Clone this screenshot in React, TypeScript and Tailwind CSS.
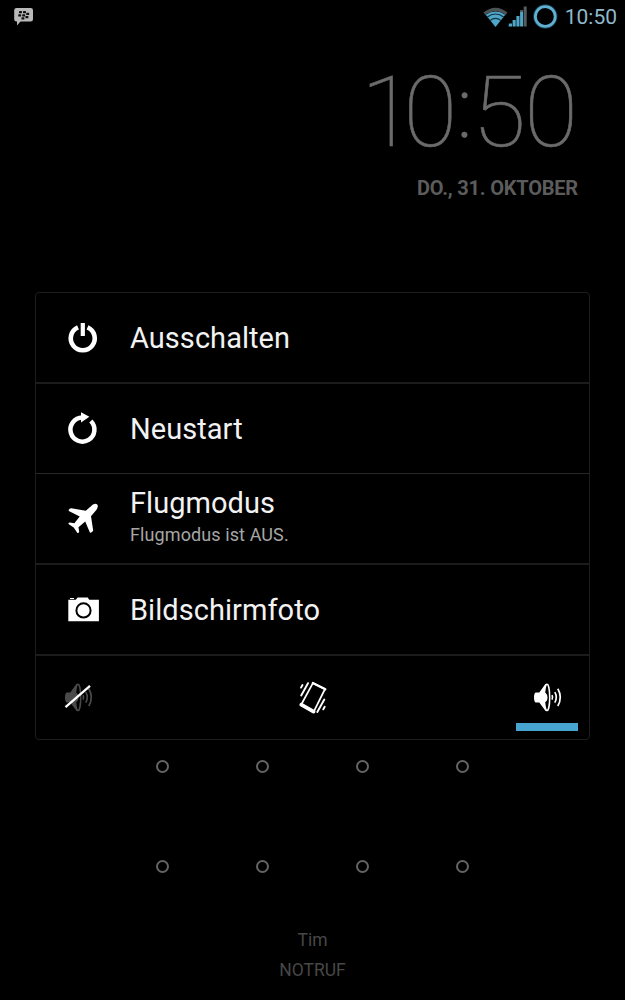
import type { ReactNode } from 'react'
import clsx from 'clsx'

function MessengerIcon() {
  const dots = [
    [19.6, 11.2], [23.6, 11.2],
    [18.8, 14.4], [22.8, 14.4], [26.8, 13],
    [22, 17.5], [26, 16.2],
  ]
  return (
    <svg width="40" height="33" viewBox="0 0 40 33">
      <path d="M16.500 8h14.200q2.300 0 2.300 2.300v9q0 2.300-2.300 2.300H20.500L17 25.500v-3.900h-.5q-2.300 0-2.300-2.300v-9q0-2.300 2.300-2.300z" fill="#b9b9b9" />
      {dots.map(([x, y]) => (
        <rect key={`${x}-${y}`} x={x} y={y} width="3" height="2.300" rx="0.600" fill="#111" transform="translate(-.6 -.2)" />
      ))}
    </svg>
  )
}

function WifiIcon() {
  return (
    <svg width="25" height="33" viewBox="0 0 25 33">
      <path d="M0.500 12.500Q12.500 3 24.500 12.500L22.600 15Q12.500 7.500 2.400 15z" fill="#4c5357" />
      <path d="M2.700 14.800Q12.500 8 22.300 14.800L12.500 27z" fill="#4fa6c9" />
      <path d="M4 17.200Q12.500 10.800 21 17.200M7 20.600Q12.500 16 18 20.600" fill="none" stroke="#133340" strokeWidth="1.200" />
    </svg>
  )
}

function SignalIcon() {
  return (
    <svg width="19" height="33" viewBox="0 0 19 33">
      <path d="M1 23.500h3V26.500H.5zM4.600 20h3.100v6.500H4.600zM8.400 16h3.100v10.500H8.400zM12.100 12h3v14.500h-3z" fill="#4fa6c9" />
      <path d="M15.700 6.500h3v20h-3zM12.100 10h3v2h-3z" fill="#565d61" />
    </svg>
  )
}

function BatteryIcon() {
  return (
    <svg width="26" height="33" viewBox="0 0 26 33">
      <circle cx="13.300" cy="16.500" r="11" fill="none" stroke="#16394a" strokeWidth="2.400" />
      <circle cx="13.300" cy="16.500" r="9.900" fill="none" stroke="#5fb0d2" strokeWidth="2.800" />
    </svg>
  )
}

function PowerIcon() {
  return (
    <svg width="36" height="36" viewBox="0 0 36 36" fill="none" stroke="#fff">
      <path d="M13 7.300A12 12 0 1 0 22.500 7.300" strokeWidth="4.600" />
      <path d="M17.800 3v13" strokeWidth="4.200" />
    </svg>
  )
}

function RestartIcon() {
  return (
    <svg width="36" height="36" viewBox="0 0 36 36">
      <path d="M25.800 10A12 12 0 1 1 17.300 6.600" fill="none" stroke="#fff" strokeWidth="4.500" />
      <path d="M16 1.200L24.400 5.700 16 11.500z" fill="#fff" />
    </svg>
  )
}

function PlaneIcon() {
  return (
    <svg width="36" height="36" viewBox="0 0 36 36" fill="#fff">
      <path d="M32.200 3.400C30.700 2.100 28.200 3.200 26.800 4.500L20.800 9.700 6.300 7.300C4.400 7.400 3.300 9 3.800 10.100L14.700 15.500 9.400 22.200 4.600 21.400Q3.100 21.800 3.500 23L8.700 26.600 12.400 32Q13.800 32.300 14.200 30.700L13.500 26.200 20.200 20.600 25 31.700Q27.200 32 28.200 29.600L26 15.200 31.300 9C32.700 7.300 33.400 4.500 32.200 3.400z" />
    </svg>
  )
}

function CameraIcon() {
  return (
    <svg width="36" height="36" viewBox="0 0 36 36">
      <path d="M3.300 7.800h7.500l1.800-2.200h10.100l1.500 2.200h9.700v21.400H3.300zM5 5.900h4v1.200H5z" fill="#fff" />
      <circle cx="18.500" cy="18.400" r="7.100" fill="none" stroke="#000" strokeWidth="2" />
    </svg>
  )
}

function SpeakerIcon({ muted = false }: { muted?: boolean }) {
  const color = muted ? '#4a4a4a' : '#fff'
  return (
    <svg width="36" height="36" viewBox="0 0 36 36" fill="none" stroke={color}>
      <path d="M6.500 12.500h3.800L16 4.500Q17.500 3.200 18.500 4v26.800Q17.500 31.600 16 30.300L10.300 22.500H6.500Q5 21.500 5 17.500T6.500 12.500z" fill={color} stroke="none" />
      <ellipse cx="18" cy="17.400" rx="2.700" ry="13.200" fill="#000" strokeWidth="1.500" />
      <path d="M15.500 12.500q3 1 3 4.900t-3 4.900z" fill={color} stroke="none" />
      <path d="M23 15.200q1.200 2.200 0 4.400" strokeWidth="1.700" />
      <path d="M25.800 12.200q3 5.200 0 10.400" strokeWidth="1.700" />
      <path d="M28.800 8.800q5 8.600 0 17.200" strokeWidth="1.700" />
      {muted && <path d="M5.500 27.200L30 5.800" stroke="#fff" strokeWidth="2.300" />}
    </svg>
  )
}

function VibrateIcon() {
  return (
    <svg width="36" height="36" viewBox="0 0 36 36" fill="none" stroke="#fff">
      <path d="M17.900 3.200L30 9 18.500 32.200 6 25z" strokeWidth="1.700" strokeLinejoin="round" />
      <path d="M17.900 3L30.300 9.200" strokeWidth="2.400" strokeLinecap="round" />
      <path d="M6.300 24.700L18.600 31.600" strokeWidth="3.800" strokeLinecap="round" />
      <path d="M13 3.200L6.200 15.500M7.500 5L6 7.600M29.300 19.500L22.300 32M29.700 26.800L28.300 29.300" strokeWidth="1.900" strokeLinecap="round" />
    </svg>
  )
}

interface MenuRowProps {
  icon: ReactNode
  label: string
  hint?: string
  className: string
}

function MenuRow({ icon, label, hint, className }: MenuRowProps) {
  return (
    <button className={clsx('flex w-full items-center pl-[29px] text-left text-[#f2f2f2]', className)}>
      {icon}
      <span className={clsx('ml-[29px] flex flex-col whitespace-nowrap', hint && 'pb-[2px]')}>
        <span className="text-[29px] leading-8 tracking-[0.05px]">{label}</span>
        {hint && <span className="mt-[2px] text-[18px] leading-7 tracking-[0.1px] text-[#a6a6a6]">{hint}</span>}
      </span>
    </button>
  )
}

export default function App() {
  return (
    <div className="flex h-[1000px] w-[625px] flex-col overflow-hidden bg-black font-['Roboto',sans-serif]">
      <header className="flex h-[33px] shrink-0 items-center">
        <MessengerIcon />
        <div className="ml-auto flex items-center pr-2">
          <WifiIcon />
          <SignalIcon />
          <span className="ml-[5px]"><BatteryIcon /></span>
          <span className="ml-[7px] pt-[2px] text-[21px] leading-[31px] text-[#8fb9cb]">10:50</span>
        </div>
      </header>

      <section className="flex h-[259px] shrink-0 flex-col items-end pr-[47px] pt-[20px] whitespace-nowrap">
        <div className="flex h-[118px] text-[98px] leading-[119px] font-thin text-[#6b6b6b] [-webkit-text-stroke:0.6px_#6b6b6b]">
          <span className="tracking-[-11px]">1</span>
          <span>0</span>
          <span className="-mt-[4px] text-[84px] [-webkit-text-stroke:1.5px_#6b6b6b]">:</span>
          <span className="tracking-[-1.5px]">5</span>
          <span>0</span>
        </div>
        <div className="mt-[5px] text-[20px] leading-6 font-bold tracking-[-0.2px] text-[#5c5c5c]">DO., 31. OKTOBER</div>
      </section>

      <main className="ml-[35px] flex h-[448px] w-[555px] shrink-0 flex-col rounded-[4px] border border-[#1d1d1d]">
        <MenuRow icon={<PowerIcon />} label="Ausschalten" className="h-[91px] border-b-2 border-[#1c1c1c]" />
        <MenuRow icon={<RestartIcon />} label="Neustart" className="h-[90px] border-b border-[#282828]" />
        <MenuRow icon={<PlaneIcon />} label="Flugmodus" hint="Flugmodus ist AUS." className="h-[91px] border-b-2 border-[#1c1c1c]" />
        <MenuRow icon={<CameraIcon />} label="Bildschirmfoto" className="h-[91px] border-b-2 border-[#1c1c1c]" />
        <div className="grid flex-1 grid-cols-[236px_244px_62px] pr-[11px]">
          <button className="flex h-full pt-6 pl-[24px]"><SpeakerIcon muted /></button>
          <button className="flex h-full pt-6 pl-[23px]"><VibrateIcon /></button>
          <button className="flex h-full w-[62px] flex-col items-center pt-6">
            <SpeakerIcon />
            <span className="mt-[7px] h-2 w-full bg-[#48a5d0]" />
          </button>
        </div>
      </main>

      <div className="mt-5 ml-[156px] grid w-[400px] shrink-0 grid-cols-4 gap-y-[87px]">
        {Array.from({ length: 8 }, (_, i) => (
          <span key={i} className="h-[13px] w-[13px] rounded-full border-2 border-[#646464]" />
        ))}
      </div>

      <footer className="mt-[52px] flex flex-col items-center text-[17.5px] leading-[30px] text-[#474747]">
        <span>Tim</span>
        <span>NOTRUF</span>
      </footer>
    </div>
  )
}
